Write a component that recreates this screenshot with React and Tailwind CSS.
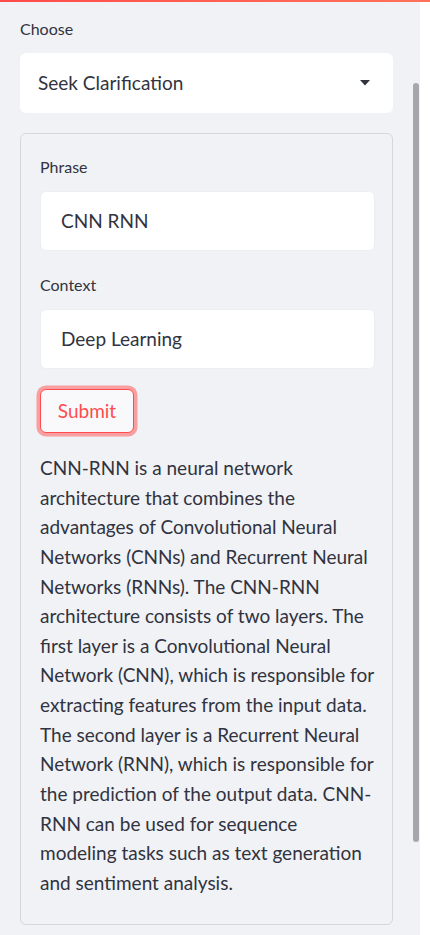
import React from 'react';

const answerLines = [
  'CNN-RNN is a neural network',
  'architecture that combines the',
  'advantages of Convolutional Neural',
  'Networks (CNNs) and Recurrent Neural',
  'Networks (RNNs). The CNN-RNN',
  'architecture consists of two layers. The',
  'first layer is a Convolutional Neural',
  'Network (CNN), which is responsible for',
  'extracting features from the input data.',
  'The second layer is a Recurrent Neural',
  'Network (RNN), which is responsible for',
  'the prediction of the output data. CNN-',
  'RNN can be used for sequence',
  'modeling tasks such as text generation',
  'and sentiment analysis.',
];

function Field({ label, value }) {
  return (
    <div>
      <div className="h-6 leading-6 text-[16px]">{label}</div>
      <div className="mt-3 h-[60px] rounded-md bg-white border border-[#eceef2] flex items-center px-5 text-[19px]">
        {value}
      </div>
    </div>
  );
}

function App() {
  return (
    <div
      className="w-[430px] h-[935px] overflow-hidden bg-white text-[#31333f]"
      style={{ fontFamily: 'Lato, "Open Sans", sans-serif' }}
    >
      {/* decoration bar */}
      <div className="h-[2px] bg-gradient-to-r from-[#ff4b4b] to-[#ff715a]" />

      <div className="relative w-[420px] h-[933px] bg-[#f0f2f6] pl-5 pr-[27px]">
        {/* scrollbar */}
        <div className="absolute right-[1px] top-[81px] w-[6px] h-[759px] rounded-full bg-[#a6a6ad]" />

        <div className="pt-[15px]">
          <div className="h-6 leading-6 text-[16px]">Choose</div>
          <div className="mt-3 h-[60px] rounded-md bg-white flex items-center justify-between pl-[18px] pr-[23px] text-[19px]">
            <span>Seek Clarification</span>
            <svg width="10" height="6" viewBox="0 0 10 6">
              <path d="M0 0h10L5 5.5z" fill="#31333f" />
            </svg>
          </div>

          <div className="mt-5 rounded-md border border-[#d5d7dc] pt-[21px] pl-[19px] pr-[17px] pb-[26px]">
            <Field label="Phrase" value="CNN RNN" />
            <div className="mt-[22px]">
              <Field label="Context" value="Deep Learning" />
            </div>
            <button className="mt-[20px] h-[44px] w-[94px] rounded-md border border-[#ff4b4b] bg-[#f9f9fb] text-[#ff4b4b] text-[19px] shadow-[0_0_0_3.5px_rgba(255,75,75,0.5)]">
              Submit
            </button>
            <p className="mt-[20px] text-[19px] leading-[29.64px] whitespace-pre-line">
              {answerLines.join('\n')}
            </p>
          </div>
        </div>
      </div>
    </div>
  );
}

export default App;
